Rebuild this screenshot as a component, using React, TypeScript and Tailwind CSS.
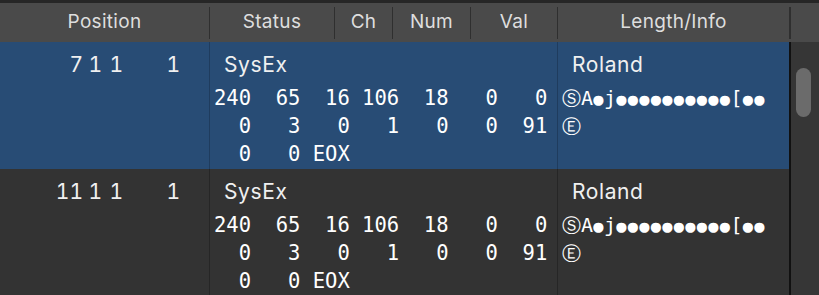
import { JSX } from "react";

const sans = "font-['Inter','Noto_Sans',sans-serif]";
const mono = "font-['DejaVu_Sans_Mono','DejaVu_Sans',monospace]";

interface Row {
  bar: string;
  selected: boolean;
}

const rows: Row[] = [
  { bar: "7", selected: true },
  { bar: "11", selected: false },
];

const info = "\u24C8A\u25CFj\u25CF\u25CF\u25CF\u25CF\u25CF\u25CF\u25CF\u25CF\u25CF\u25CF[\u25CF\u25CF".split("");

function HeaderCell({ label, w }: { label: string; w: string }): JSX.Element {
  return (
    <div className={`${w} h-full flex items-center justify-center text-[19px] tracking-[0.3px] text-[#dedede]`}>
      {label}
    </div>
  );
}

function HeaderSep(): JSX.Element {
  return <div className="w-px h-[32px] bg-[#2f2f2f]" />;
}

function InfoChar({ c }: { c: string }): JSX.Element {
  if (c === "\u25CF") {
    return <span className="inline-block w-[11.5px] text-center text-[17px]">{c}</span>;
  }
  if (c === "\u24C8" || c === "\u24BA") {
    return <span className="inline-block w-[19px] text-left text-[19px]">{c}</span>;
  }
  return <span className="inline-block w-[11.5px] text-center">{c}</span>;
}

function EventRow({ bar, selected }: Row): JSX.Element {
  const line = selected ? "bg-[#1f3c5e]" : "bg-[#262626]";
  return (
    <div className={`flex h-[127px] shrink-0 ${selected ? "bg-[#284c75]" : "bg-[#333333]"}`}>
      {/* position */}
      <div className="w-[209px] pt-[9px] pr-[29px] flex justify-end">
        <div className="flex h-[28px] leading-[28px] text-[21px] tabular-nums text-[#f0f0f0]">
          <span className="w-[30px] text-right">{bar}</span>
          <span className="w-[19px] text-right">1</span>
          <span className="w-[21px] text-right">1</span>
          <span className="w-[57px] text-right">1</span>
        </div>
      </div>
      <div className={`w-px ${line}`} />
      {/* status / data */}
      <div className="w-[347px] pt-[9px] overflow-hidden">
        <div className="pl-[14px] h-[28px] leading-[28px] text-[21px] text-[#f0f0f0] tracking-[0.6px]">SysEx</div>
        <div className={`${mono} mt-[5px] pl-[4px] text-[20.5px] leading-[28px] text-white whitespace-pre`}>
          <div>{"240  65  16 106  18   0   0"}</div>
          <div>{"  0   3   0   1   0   0  91"}</div>
          <div>{"  0   0 EOX"}</div>
        </div>
      </div>
      <div className={`w-px ${line}`} />
      {/* info */}
      <div className="w-[231px] pt-[9px] overflow-hidden">
        <div className="pl-[14px] h-[28px] leading-[28px] text-[21px] text-[#f0f0f0] tracking-[0.6px]">Roland</div>
        <div className={`${mono} mt-[5px] pl-[4px] text-[20px] leading-[28px] text-white whitespace-pre`}>
          <div className="h-[28px]">
            {info.map((c, i) => (
              <InfoChar key={i} c={c} />
            ))}
          </div>
          <div className="h-[28px]">
            <InfoChar c={"\u24BA"} />
          </div>
        </div>
      </div>
    </div>
  );
}

export default function App(): JSX.Element {
  return (
    <div className={`${sans} w-[819px] h-[295px] bg-[#333333] flex flex-col overflow-hidden`}>
      <div className="h-[3px] bg-[#262626] shrink-0" />
      {/* header */}
      <div className="h-[39px] shrink-0 bg-[#4a4a4a] flex items-center">
        <HeaderCell label="Position" w="w-[209px]" />
        <HeaderSep />
        <HeaderCell label="Status" w="w-[124px]" />
        <HeaderSep />
        <HeaderCell label="Ch" w="w-[57px]" />
        <HeaderSep />
        <HeaderCell label="Num" w="w-[77px]" />
        <HeaderSep />
        <HeaderCell label="Val" w="w-[86px]" />
        <HeaderSep />
        <HeaderCell label="Length/Info" w="w-[231px]" />
        <div className="w-[2px] h-[32px] bg-[#2f2f2f]" />
      </div>
      {/* list + scrollbar */}
      <div className="flex flex-1 min-h-0">
        <div className="w-[789px] flex flex-col overflow-hidden">
          {rows.map((r) => (
            <EventRow key={r.bar} {...r} />
          ))}
        </div>
        <div className="w-[2px] bg-[#111111]" />
        <div className="flex-1 bg-[#363636] pt-[26px] pl-[5px]">
          <div className="w-[15px] h-[49px] rounded-full bg-[#6b6b6b]" />
        </div>
      </div>
    </div>
  );
}
